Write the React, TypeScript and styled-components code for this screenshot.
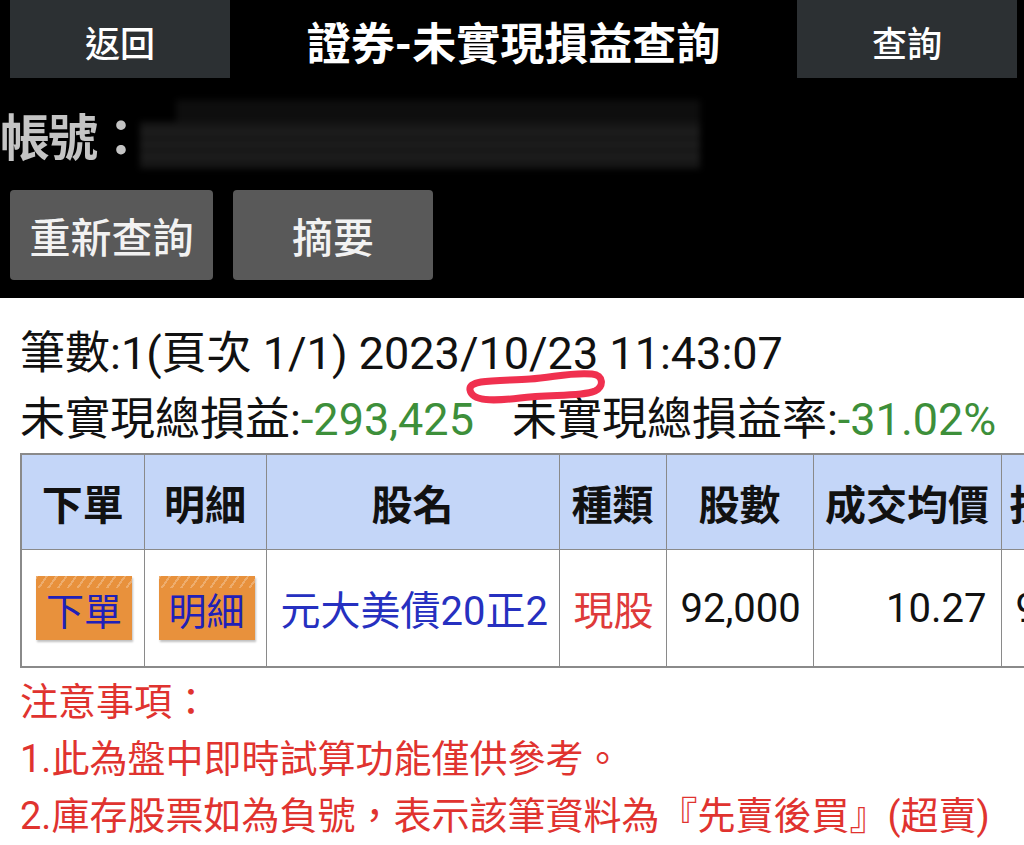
import React from 'react';
import styled, { createGlobalStyle } from 'styled-components';

const GlobalStyle = createGlobalStyle`
  html, body {
    margin: 0;
    padding: 0;
    background: #ffffff;
    overflow: hidden;
  }
  body {
    font-family: Roboto, "Noto Sans CJK TC", sans-serif;
  }
`;

const Colors = {
  black: '#000000',
  navButton: '#2c3033',
  actionButton: '#595959',
  label: '#c4c4c4',
  headerCell: '#c4d6f8',
  border: '#8a8a8a',
  green: '#3d8f3a',
  blue: '#2630c0',
  red: '#de3a3a',
  note: '#e0332f',
  orange: '#e8913c',
};

const App = () => (
  <>
    <GlobalStyle />
    <Page>
      <Header>
        <TopBar>
          <NavButton>返回</NavButton>
          <Title>證券-未實現損益查詢</Title>
          <NavButton>查詢</NavButton>
        </TopBar>
        <AccountRow>
          <AccountLabel>帳號：</AccountLabel>
          <Masked>
            <MaskTop />
            <MaskBottom />
          </Masked>
        </AccountRow>
        <ActionRow>
          <ActionButton $width={203}>重新查詢</ActionButton>
          <ActionButton $width={200}>摘要</ActionButton>
        </ActionRow>
      </Header>
      <Content>
        <InfoLine>筆數:1(頁次 1/1) 2023/10/23 11:43:07</InfoLine>
        <InfoLine>
          未實現總損益:<Green>-293,425</Green>
          <Gap />
          未實現總損益率:<Green>-31.02%</Green>
        </InfoLine>
        <Scribble width="150" height="40" viewBox="0 0 150 40">
          <path
            d="M10 24 C8 13, 40 15, 70 13 C95 11, 112 6, 132 8 C144 9, 144 21, 135 25 C120 31, 90 28, 60 32 C35 35, 12 36, 10 24 Z"
            fill="none"
            stroke="#f0304f"
            strokeWidth="7"
            strokeLinejoin="round"
          />
        </Scribble>
        <Table>
          <colgroup>
            <col style={{ width: 123 }} />
            <col style={{ width: 122 }} />
            <col style={{ width: 293 }} />
            <col style={{ width: 107 }} />
            <col style={{ width: 147 }} />
            <col style={{ width: 188 }} />
            <col style={{ width: 160 }} />
            <col style={{ width: 160 }} />
          </colgroup>
          <thead>
            <tr>
              <Th>下單</Th>
              <Th>明細</Th>
              <Th>股名</Th>
              <Th>種類</Th>
              <Th>股數</Th>
              <Th>成交均價</Th>
              <Th $align="left">損益試算</Th>
              <Th>報酬率</Th>
            </tr>
          </thead>
          <tbody>
            <tr>
              <Td>
                <OrderButton>下單</OrderButton>
              </Td>
              <Td>
                <OrderButton>明細</OrderButton>
              </Td>
              <Td $align="left" $color={Colors.blue}>元大美債20正2</Td>
              <Td $color={Colors.red}>現股</Td>
              <Td>92,000</Td>
              <Td $align="right">10.27</Td>
              <Td $align="left">945,280</Td>
              <Td>-31.02%</Td>
            </tr>
          </tbody>
        </Table>
        <Notes>
          <Note>注意事項：</Note>
          <Note>1.此為盤中即時試算功能僅供參考。</Note>
          <Note>2.庫存股票如為負號，表示該筆資料為『先賣後買』(超賣)</Note>
        </Notes>
      </Content>
    </Page>
  </>
);

export default App;

const Page = styled.div`
  width: 1024px;
  min-height: 845px;
  overflow: hidden;
`;

const Header = styled.div`
  background: ${Colors.black};
  height: 298px;
  display: flex;
  flex-direction: column;
`;

const TopBar = styled.div`
  display: flex;
  justify-content: space-between;
  align-items: center;
  padding: 0 7px 0 10px;
  height: 78px;
`;

const NavButton = styled.div`
  width: 220px;
  height: 78px;
  background: ${Colors.navButton};
  color: #ffffff;
  font-size: 35px;
  font-weight: 500;
  display: flex;
  align-items: center;
  justify-content: center;
  padding-top: 4px;
  box-sizing: border-box;
`;

const Title = styled.div`
  color: #ffffff;
  font-size: 44px;
  font-weight: 700;
  padding-top: 4px;
`;

const AccountRow = styled.div`
  display: flex;
  align-items: center;
  height: 72px;
  margin-top: 20px;
`;

const AccountLabel = styled.div`
  color: ${Colors.label};
  font-size: 50px;
  font-weight: 700;
  width: 140px;
  letter-spacing: -2px;
  white-space: nowrap;
`;

const Masked = styled.div`
  width: 560px;
  height: 68px;
  display: flex;
  flex-direction: column;
  filter: blur(3px);
`;

const MaskTop = styled.div`
  height: 22px;
  margin-left: 36px;
  background: #0e0e0e;
`;

const MaskBottom = styled.div`
  flex: 1;
  background: repeating-linear-gradient(
    180deg,
    #171717 0px,
    #171717 9px,
    #232323 9px,
    #232323 12px
  );
`;

const ActionRow = styled.div`
  display: flex;
  gap: 20px;
  padding: 0 10px;
  margin-top: 20px;
`;

const ActionButton = styled.div<{ $width: number }>`
  width: ${(p) => p.$width}px;
  height: 90px;
  border-radius: 4px;
  background: ${Colors.actionButton};
  color: #f2f2f2;
  font-size: 41px;
  font-weight: 500;
  display: flex;
  align-items: center;
  justify-content: center;
`;

const Content = styled.div`
  position: relative;
  padding: 23px 0 0 20px;
`;

const InfoLine = styled.div`
  font-size: 45px;
  line-height: 66px;
  color: #111111;
  white-space: nowrap;
`;

const Green = styled.span`
  color: ${Colors.green};
`;

const Gap = styled.span`
  display: inline-block;
  width: 38px;
`;

const Scribble = styled.svg`
  position: absolute;
  left: 460px;
  top: 68px;
`;

const Table = styled.table`
  border-collapse: collapse;
  table-layout: fixed;
  width: 1300px;
  border: 2px solid ${Colors.border};
`;

const Th = styled.th<{ $align?: string }>`
  background: ${Colors.headerCell};
  height: 94px;
  padding: 0 8px;
  border: 1px solid ${Colors.border};
  font-size: 41px;
  font-weight: 700;
  color: #111111;
  text-align: ${(p) => p.$align || 'center'};
  white-space: nowrap;
  overflow: hidden;
`;

const Td = styled.td<{ $align?: string; $color?: string }>`
  height: 116px;
  padding: 0 14px;
  border: 1px solid ${Colors.border};
  font-size: 40px;
  color: ${(p) => p.$color || '#111111'};
  text-align: ${(p) => p.$align || 'center'};
  white-space: nowrap;
  overflow: hidden;
`;

const OrderButton = styled.span`
  display: inline-flex;
  align-items: center;
  justify-content: center;
  width: 96px;
  height: 64px;
  background: repeating-linear-gradient(
      125deg,
      rgba(255, 255, 255, 0.25) 0px,
      rgba(255, 255, 255, 0.25) 2px,
      transparent 2px,
      transparent 8px
    )
    top / 100% 12px no-repeat,
    ${Colors.orange};
  box-shadow: 1px 2px 2px rgba(0, 0, 0, 0.25);
  color: #2020b8;
  font-size: 38px;
`;

const Notes = styled.div`
  padding-top: 6px;
`;

const Note = styled.div`
  color: ${Colors.note};
  font-size: 38px;
  line-height: 57px;
  white-space: nowrap;
`;
